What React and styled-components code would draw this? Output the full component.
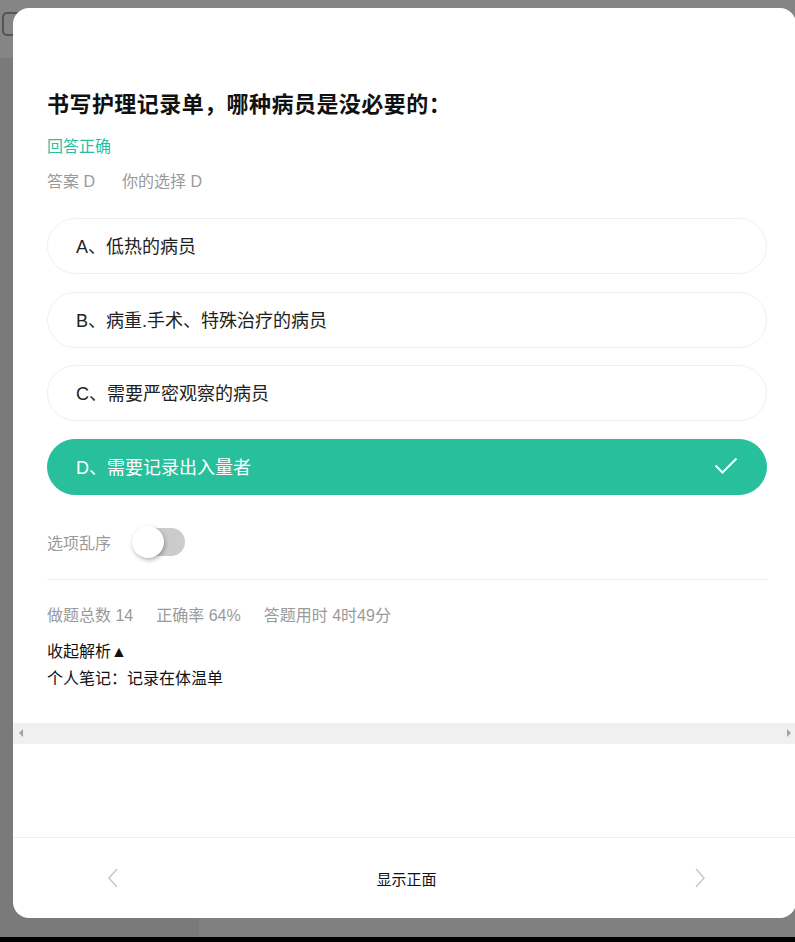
import React from 'react';
import styled, { createGlobalStyle } from 'styled-components';

const GlobalStyle = createGlobalStyle`
  html, body {
    margin: 0;
    padding: 0;
  }
  body {
    width: 795px;
    height: 942px;
    overflow: hidden;
    background: #7f7f7f;
    font-family: "Liberation Sans", "Noto Sans CJK SC", sans-serif;
  }
`;

/* dimmed page behind the dialog */
const Page = styled.div`
  position: relative;
  width: 795px;
  height: 942px;
  display: flex;
  flex-direction: column;
`;

const PageHeader = styled.div`
  height: 58px;
  background: #858585;
  border-bottom: 1px solid #7a7a7a;
  display: flex;
  align-items: center;
  padding-left: 2px;
`;

const GhostButton = styled.div`
  width: 40px;
  height: 20px;
  border: 2px solid #555;
  border-radius: 5px;
  margin-top: -10px;
`;

const PageBody = styled.div`
  flex: 1;
  display: flex;
`;

const SideColumn = styled.div`
  width: 199px;
  background: #7a7a7a;
`;

const MainColumn = styled.div`
  flex: 1;
  background: #808080;
`;

const PageBottom = styled.div`
  height: 5px;
  background: #000;
`;

/* dialog */
const Modal = styled.div`
  position: absolute;
  top: 8px;
  left: 13px;
  width: 783px;
  height: 910px;
  background: #fff;
  border-radius: 16px;
  display: flex;
  flex-direction: column;
  overflow: hidden;
`;

const Body = styled.div`
  flex: 1;
`;

const Content = styled.div`
  padding: 82px 29px 0 34px;
`;

const Title = styled.h2`
  margin: 0;
  font-size: 22px;
  line-height: 30px;
  font-weight: bold;
  letter-spacing: 0.45px;
  color: #111;
`;

const Verdict = styled.div`
  margin-top: 15px;
  font-size: 16px;
  line-height: 24px;
  color: #2bbf9d;
`;

const MetaRow = styled.div`
  display: flex;
  gap: ${p => p.gap || 27}px;
  margin-top: ${p => p.top || 11}px;
  font-size: 16px;
  line-height: 24px;
  color: #9a9a9a;
`;

const Options = styled.div`
  display: flex;
  flex-direction: column;
  gap: 17.5px;
  margin-top: 24px;
`;

const Option = styled.div`
  height: 56px;
  box-sizing: border-box;
  border-radius: 28px;
  border: 1px solid ${p => (p.correct ? '#28bf9d' : '#f0f0f0')};
  background: ${p => (p.correct ? '#28bf9d' : '#fff')};
  color: ${p => (p.correct ? '#fff' : '#222')};
  display: flex;
  align-items: center;
  justify-content: space-between;
  padding: 0 28px 2px 28px;
  font-size: 18px;
`;

const ToggleRow = styled.div`
  display: flex;
  align-items: center;
  margin-top: 31px;
  font-size: 16px;
  color: #9a9a9a;
  height: 32px;
`;

const Track = styled.div`
  position: relative;
  width: 50px;
  height: 28px;
  border-radius: 14px;
  background: #cccccc;
  margin-left: 24px;
`;

const Knob = styled.div`
  position: absolute;
  left: -3px;
  top: -2px;
  width: 32px;
  height: 32px;
  border-radius: 50%;
  background: #fff;
  box-shadow: 1px 2px 4px rgba(0, 0, 0, 0.3);
`;

const Divider = styled.div`
  height: 1px;
  background: #efefef;
  margin-top: 21px;
`;

const Line = styled.div`
  font-size: 16px;
  line-height: 27px;
  color: #111;
  margin-top: ${p => p.top || 0}px;
`;

const ScrollBar = styled.div`
  margin-top: 31px;
  height: 21px;
  background: #f0f0f0;
  display: flex;
  align-items: center;
  justify-content: space-between;
  padding: 0 5px 0 6px;
`;

const Arrow = styled.span`
  width: 0;
  height: 0;
  border-top: 4px solid transparent;
  border-bottom: 4px solid transparent;
  ${p => (p.right ? 'border-left: 4px solid #a3a3a3;' : 'border-right: 4px solid #a3a3a3;')}
`;

const Footer = styled.div`
  height: 81px;
  border-top: 1px solid #efefef;
  box-sizing: border-box;
  display: flex;
  align-items: center;
  justify-content: space-between;
  padding: 0 90px 0 94px;
  font-size: 15px;
  color: #111;
`;

const Check = () => (
  <svg width="24" height="18" viewBox="0 0 24 18">
    <polyline points="1.5,8.5 8.5,15.5 22.5,1.5" fill="none" stroke="#fff" strokeWidth="2" />
  </svg>
);

const Chevron = ({ dir }) => (
  <svg width="12" height="20" viewBox="0 0 12 20">
    <polyline
      points={dir === 'left' ? '10,1 2,10 10,19' : '2,1 10,10 2,19'}
      fill="none"
      stroke="#c8c8c8"
      strokeWidth="1.5"
    />
  </svg>
);

const options = [
  { key: 'A', text: 'A、低热的病员' },
  { key: 'B', text: 'B、病重.手术、特殊治疗的病员' },
  { key: 'C', text: 'C、需要严密观察的病员' },
  { key: 'D', text: 'D、需要记录出入量者', correct: true },
];

const App = () => {
  return (
    <>
      <GlobalStyle />
      <Page>
        <PageHeader>
          <GhostButton />
        </PageHeader>
        <PageBody>
          <SideColumn />
          <MainColumn />
        </PageBody>
        <PageBottom />

        <Modal>
          <Body>
            <Content>
              <Title>书写护理记录单，哪种病员是没必要的：</Title>
              <Verdict>回答正确</Verdict>
              <MetaRow>
                <span>答案 D</span>
                <span>你的选择 D</span>
              </MetaRow>
              <Options>
                {options.map(o => (
                  <Option key={o.key} correct={o.correct}>
                    <span>{o.text}</span>
                    {o.correct && <Check />}
                  </Option>
                ))}
              </Options>
              <ToggleRow>
                <span>选项乱序</span>
                <Track>
                  <Knob />
                </Track>
              </ToggleRow>
              <Divider />
              <MetaRow top={24} gap={23}>
                <span>做题总数 14</span>
                <span>正确率 64%</span>
                <span>答题用时 4时49分</span>
              </MetaRow>
              <Line top={10}>收起解析▲</Line>
              <Line>个人笔记：记录在体温单</Line>
            </Content>
            <ScrollBar>
              <Arrow />
              <Arrow right />
            </ScrollBar>
          </Body>
          <Footer>
            <Chevron dir="left" />
            <span>显示正面</span>
            <Chevron dir="right" />
          </Footer>
        </Modal>
      </Page>
    </>
  );
};

export default App;
